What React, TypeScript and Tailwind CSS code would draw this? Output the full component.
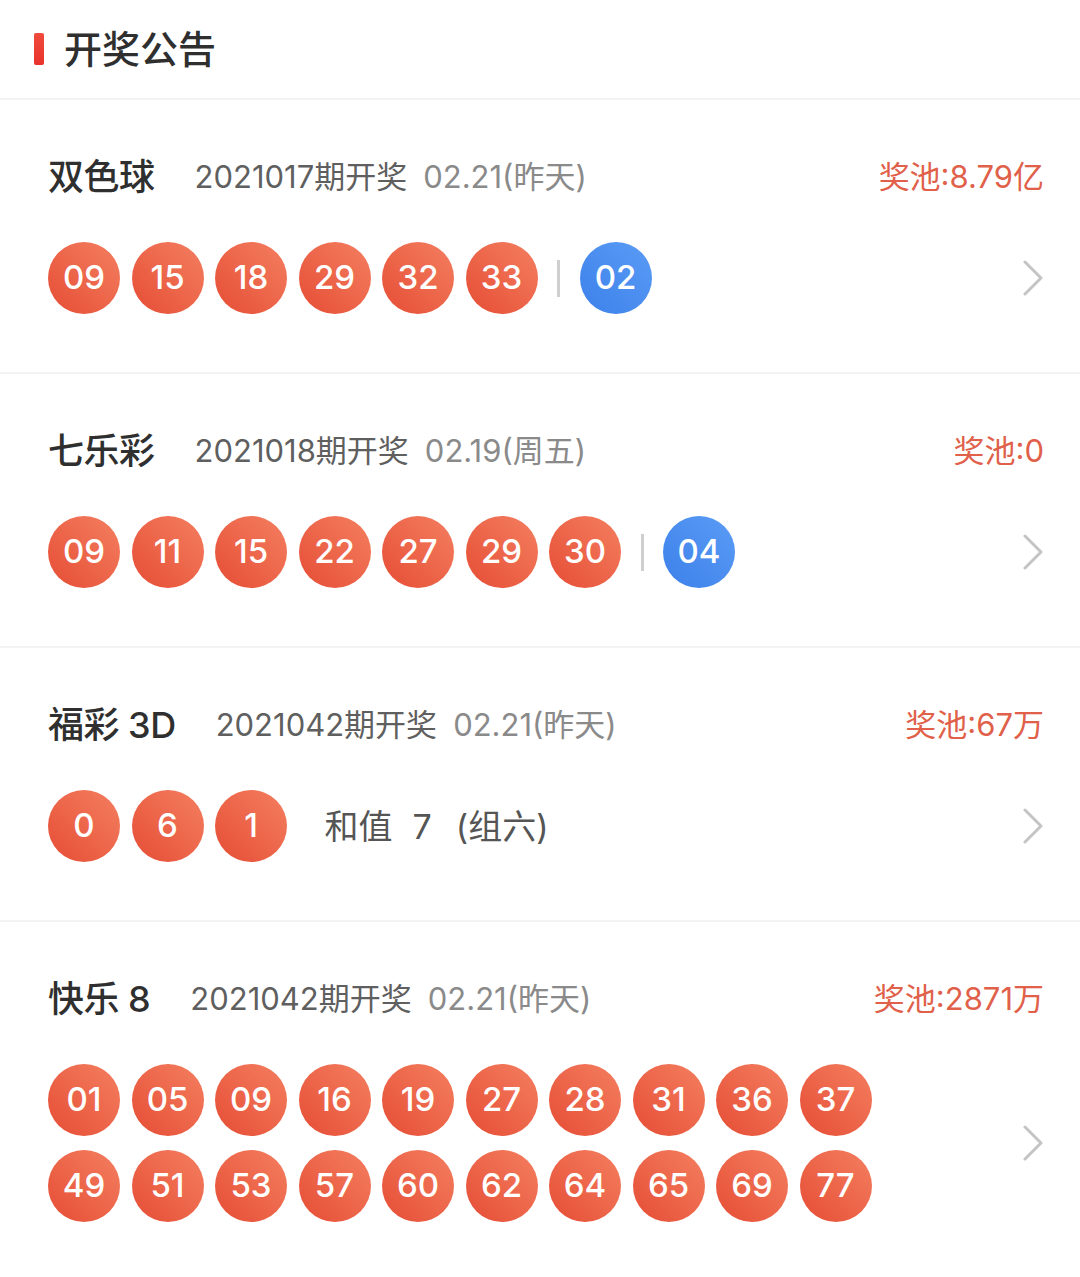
const FONT = { fontFamily: 'Inter, "Noto Sans CJK SC", "Noto Sans", sans-serif' };

type Draw = {
  name: string;
  issue: string;
  date: string;
  pool: string;
  red: string[];
  blue?: string[];
  extra?: boolean;
  rows?: string[][];
};

const draws: Draw[] = [
  {
    name: '双色球',
    issue: '2021017期开奖',
    date: '02.21(昨天)',
    pool: '奖池:8.79亿',
    red: ['09', '15', '18', '29', '32', '33'],
    blue: ['02'],
  },
  {
    name: '七乐彩',
    issue: '2021018期开奖',
    date: '02.19(周五)',
    pool: '奖池:0',
    red: ['09', '11', '15', '22', '27', '29', '30'],
    blue: ['04'],
  },
  {
    name: '福彩 3D',
    issue: '2021042期开奖',
    date: '02.21(昨天)',
    pool: '奖池:67万',
    red: ['0', '6', '1'],
    extra: true,
  },
  {
    name: '快乐 8',
    issue: '2021042期开奖',
    date: '02.21(昨天)',
    pool: '奖池:2871万',
    red: [],
    rows: [
      ['01', '05', '09', '16', '19', '27', '28', '31', '36', '37'],
      ['49', '51', '53', '57', '60', '62', '64', '65', '69', '77'],
    ],
  },
];

function Ball({ n, blue }: { n: string; blue?: boolean }) {
  return (
    <div
      className={
        blue
          ? 'flex h-[72px] w-[72px] shrink-0 items-center justify-center rounded-full bg-gradient-to-bl from-[#5a9cf5] to-[#3d80ea] text-[33px] font-medium text-white'
          : 'flex h-[72px] w-[72px] shrink-0 items-center justify-center rounded-full bg-gradient-to-bl from-[#f47e60] to-[#e54c34] text-[33px] font-medium text-white'
      }
    >
      {n}
    </div>
  );
}

function Chevron() {
  return (
    <svg width="22" height="36" viewBox="0 0 22 36" fill="none" className="shrink-0">
      <path d="M3 2 L19 18 L3 34" stroke="#c4c4c4" strokeWidth="3" strokeLinecap="round" strokeLinejoin="round" />
    </svg>
  );
}

function Section({ d }: { d: Draw }) {
  return (
    <div className="border-b-2 border-[#f3f3f3] pb-[58px] pl-[48px] pr-[36px] pt-[56px] last:border-b-0">
      <div className="flex h-[42px] items-center">
        <span className="text-[36px] font-medium tracking-[-0.5px] text-[#2f2f2f]">{d.name}</span>
        <span className="ml-[40px] text-[31px] text-[#5f5f5f]">{d.issue}</span>
        <span className="ml-[16px] text-[31px] text-[#8a8a8a]">{d.date}</span>
        <span className="ml-auto text-[31px] text-[#e0604a]">{d.pool}</span>
      </div>
      <div className="mt-[44px] flex items-center">
        {d.rows ? (
          <div className="flex flex-col gap-[14px]">
            {d.rows.map((r, i) => (
              <div key={i} className="flex gap-[11.5px]">
                {r.map((n) => (
                  <Ball key={n} n={n} />
                ))}
              </div>
            ))}
          </div>
        ) : (
          <div className="flex items-center gap-[11.5px]">
            {d.red.map((n, i) => (
              <Ball key={i} n={n} />
            ))}
            {d.blue && (
              <>
                <div className="mx-[8px] h-[37px] w-[3px] bg-[#cfcfcf]" />
                {d.blue.map((n) => (
                  <Ball key={n} n={n} blue />
                ))}
              </>
            )}
            {d.extra && (
              <div className="ml-[26px] flex items-center text-[34px] text-[#555555]">
                <span>和值</span>
                <span className="ml-[20px]">7</span>
                <span className="ml-[24px]">(组六)</span>
              </div>
            )}
          </div>
        )}
        <div className="ml-auto">
          <Chevron />
        </div>
      </div>
    </div>
  );
}

export default function App() {
  return (
    <div className="min-h-[1277px] w-[1080px] bg-white" style={FONT}>
      <div className="flex h-[100px] items-center border-b-2 border-[#f3f3f3] pl-[34px]">
        <div className="h-[32px] w-[10px] rounded-[2px] bg-gradient-to-b from-[#f04b3c] to-[#e8322b]" />
        <span className="ml-[20px] text-[38px] font-medium text-[#2f2f2f]">开奖公告</span>
      </div>
      {draws.map((d) => (
        <Section key={d.name} d={d} />
      ))}
    </div>
  );
}
